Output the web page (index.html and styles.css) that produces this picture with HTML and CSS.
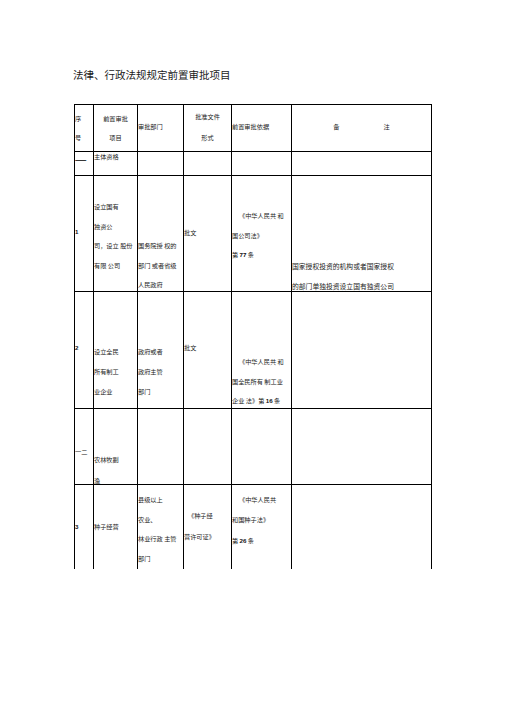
FILE: index.html
```html
<!DOCTYPE html>
<html lang="zh">
<head>
<meta charset="utf-8">
<title>法律、行政法规规定前置审批项目</title>
<link rel="stylesheet" href="styles.css">
</head>
<body>
<div class="page">
  <h1 class="title">法律、行政法规规定前置审批项目</h1>
  <div class="grid">
    <!-- header row -->
    <div class="cell h1c1 lh19"><div>序</div><div>号</div></div>
    <div class="cell h1c2 lh19 center"><div>前置审批</div><div>项目</div></div>
    <div class="cell h1c3 lh10"><div>审批部门</div></div>
    <div class="cell h1c4 lh21 center"><div>批准文件</div><div>形式</div></div>
    <div class="cell h1c5 lh10"><div>前置审批依据</div></div>
    <div class="cell h1c6 lh10"><div class="note-head"><span>备</span><span>注</span></div></div>

    <!-- row 一 -->
    <div class="cell r2c1 lh10"><div class="dash">一一</div></div>
    <div class="cell r2c2 lh10"><div>主体资格</div></div>
    <div class="cell"></div>
    <div class="cell"></div>
    <div class="cell"></div>
    <div class="cell"></div>

    <!-- row 1 -->
    <div class="cell r3c1 lh10"><div class="num">1</div></div>
    <div class="cell r3c2 lh197"><div>设立国有</div><div>独资公</div><div>司，设立 股份</div><div>有限 公司</div></div>
    <div class="cell r3c3 lh197"><div>国务院授 权的</div><div>部门 或者省级</div><div>人民政府</div></div>
    <div class="cell r3c4 lh10"><div>批文</div></div>
    <div class="cell r3c5 lh195"><div class="indent">《中华人民共 和</div><div>国公司法》</div><div>第 <b class="num">77</b> 条</div></div>
    <div class="cell r3c6 lh195 wide"><div>国家授权投资的机构或者国家授权</div><div>的部门单独投资设立国有独资公司</div></div>

    <!-- row 2 -->
    <div class="cell r4c1 lh10"><div class="num">2</div></div>
    <div class="cell r4c2 lh20"><div>设立全民</div><div>所有制工</div><div>业企业</div></div>
    <div class="cell r4c3 lh20"><div>政府或者</div><div>政府主管</div><div>部门</div></div>
    <div class="cell r4c4 lh10"><div>批文</div></div>
    <div class="cell r4c5 lh195"><div class="indent">《中华人民共 和</div><div>国全民所有 制工业</div><div>企业 法》第 <b class="num">16</b> 条</div></div>
    <div class="cell"></div>

    <!-- row 二 -->
    <div class="cell r5c1 lh10"><div>一二</div></div>
    <div class="cell r5c2 lh21"><div>农林牧副</div><div>渔</div></div>
    <div class="cell"></div>
    <div class="cell"></div>
    <div class="cell"></div>
    <div class="cell"></div>

    <!-- row 3 -->
    <div class="cell last r6c1 lh10"><div class="num">3</div></div>
    <div class="cell last r6c2 lh10"><div>种子经营</div></div>
    <div class="cell last r6c3 lh195"><div>县级以上</div><div>农业、</div><div>林业行政 主管</div><div>部门</div></div>
    <div class="cell last r6c4 lh21"><div class="indent-s">《种子经</div><div>营许可证》</div></div>
    <div class="cell last r6c5 lh205"><div class="indent">《中华人民共</div><div>和国种子法》</div><div>第 <b class="num">26</b> 条</div></div>
    <div class="cell last"></div>
  </div>
</div>
</body>
</html>
```
FILE: styles.css
```css
* { box-sizing: border-box; }
html, body { margin: 0; padding: 0; background: #fff; }
body {
  font-family: "Noto Sans CJK SC", "Liberation Sans", sans-serif;
  color: #222;
}
.page { width: 505px; height: 714px; padding-top: 68px; }
.title {
  margin: 0 0 22px 73px;
  font-size: 10.5px;
  line-height: 14px;
  font-weight: normal;
  color: #1a1a1a;
}
.grid {
  margin-left: 74px;
  display: grid;
  grid-template-columns: 19px 44px 46px 48px 60px 140px;
  grid-template-rows: 47px 24px 116px 117px 76px 84px;
  border-left: 1px solid #000;
  border-top: 1px solid #000;
  width: 358px;
  font-size: 6.2px;
}
.cell {
  border-right: 1px solid #000;
  border-bottom: 1px solid #000;
  white-space: nowrap;
  overflow: visible;
  min-width: 0;
}
.cell.last { border-bottom: none; }
.center { text-align: center; }
.lh10 div, .lh10 { line-height: 10px; }
.lh19 div { line-height: 19px; }
.lh20 div { line-height: 20px; }
.lh21 div { line-height: 21px; }
.lh195 div { line-height: 19.5px; }
.lh197 div { line-height: 19.7px; }
.lh205 div { line-height: 20.5px; }
.num { font-weight: bold; font-family: "Liberation Sans", sans-serif; color: #111; }
.indent { text-indent: 7px; }
.indent-s { text-indent: 4px; }
.wide { font-size: 6.8px; }
.dash { font-weight: bold; color: #111; letter-spacing: -1px; }

.note-head { display: flex; justify-content: center; gap: 44px; }

.h1c1, .h1c2 { padding-top: 3.5px; }
.h1c3, .h1c5, .h1c6 { padding-top: 17px; }
.h1c4 { padding-top: 0.5px; }

.r2c1 { padding-top: 4px; }
.r2c2 { padding-top: 0; }

.r3c1 { padding-top: 51px; }
.r3c2 { padding-top: 21px; }
.r3c3 { padding-top: 60px; }
.r3c4 { padding-top: 52px; }
.r3c5 { padding-top: 30px; }
.r3c6 { padding-top: 81px; }

.r4c1 { padding-top: 51px; }
.r4c2, .r4c3 { padding-top: 50px; }
.r4c4 { padding-top: 51px; }
.r4c5 { padding-top: 60px; }

.r5c1 { padding-top: 38px; }
.r5c2 { padding-top: 39.5px; }

.r6c1, .r6c2 { padding-top: 37px; }
.r6c3 { padding-top: 5px; }
.r6c4 { padding-top: 19.5px; }
.r6c5 { padding-top: 4.75px; }
```
